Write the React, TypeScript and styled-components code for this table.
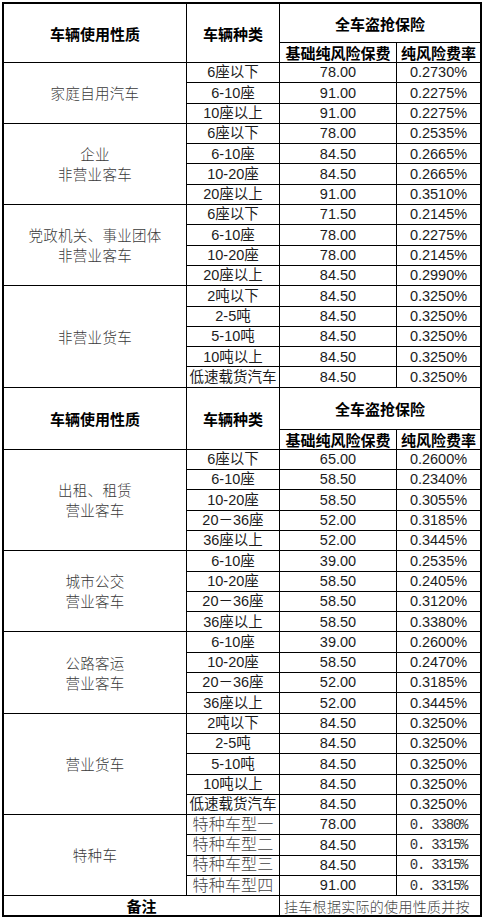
import React from 'react'
import styled, { createGlobalStyle } from 'styled-components'

const GlobalStyle = createGlobalStyle`
  html, body {
    margin: 0;
    padding: 0;
    background: #fff;
  }
  body {
    font-family: "Liberation Sans", "Noto Sans CJK SC", sans-serif;
  }
`

type Row = [string, string, string] // kind, base premium, rate
type Section = {
  name: string[] // category label, one entry per line
  rows: Row[]
  special?: boolean
}

const trucks: Row[] = [
  ['2吨以下', '84.50', '0.3250%'],
  ['2-5吨', '84.50', '0.3250%'],
  ['5-10吨', '84.50', '0.3250%'],
  ['10吨以上', '84.50', '0.3250%'],
  ['低速载货汽车', '84.50', '0.3250%'],
]

const partOne: Section[] = [
  {
    name: ['家庭自用汽车'],
    rows: [
      ['6座以下', '78.00', '0.2730%'],
      ['6-10座', '91.00', '0.2275%'],
      ['10座以上', '91.00', '0.2275%'],
    ],
  },
  {
    name: ['企业', '非营业客车'],
    rows: [
      ['6座以下', '78.00', '0.2535%'],
      ['6-10座', '84.50', '0.2665%'],
      ['10-20座', '84.50', '0.2665%'],
      ['20座以上', '91.00', '0.3510%'],
    ],
  },
  {
    name: ['党政机关、事业团体', '非营业客车'],
    rows: [
      ['6座以下', '71.50', '0.2145%'],
      ['6-10座', '78.00', '0.2275%'],
      ['10-20座', '78.00', '0.2145%'],
      ['20座以上', '84.50', '0.2990%'],
    ],
  },
  { name: ['非营业货车'], rows: trucks },
]

const partTwo: Section[] = [
  {
    name: ['出租、租赁', '营业客车'],
    rows: [
      ['6座以下', '65.00', '0.2600%'],
      ['6-10座', '58.50', '0.2340%'],
      ['10-20座', '58.50', '0.3055%'],
      ['20－36座', '52.00', '0.3185%'],
      ['36座以上', '52.00', '0.3445%'],
    ],
  },
  {
    name: ['城市公交', '营业客车'],
    rows: [
      ['6-10座', '39.00', '0.2535%'],
      ['10-20座', '58.50', '0.2405%'],
      ['20－36座', '58.50', '0.3120%'],
      ['36座以上', '58.50', '0.3380%'],
    ],
  },
  {
    name: ['公路客运', '营业客车'],
    rows: [
      ['6-10座', '39.00', '0.2600%'],
      ['10-20座', '58.50', '0.2470%'],
      ['20－36座', '52.00', '0.3185%'],
      ['36座以上', '52.00', '0.3445%'],
    ],
  },
  { name: ['营业货车'], rows: trucks },
  {
    name: ['特种车'],
    special: true,
    rows: [
      ['特种车型一', '78.00', '0. 3380%'],
      ['特种车型二', '84.50', '0. 3315%'],
      ['特种车型三', '84.50', '0. 3315%'],
      ['特种车型四', '91.00', '0. 3315%'],
    ],
  },
]

// the black background shows through the 1px gaps and becomes the rules
const Sheet = styled.div`
  display: flex;
  flex-direction: column;
  gap: 1px;
  width: fit-content;
  margin: 2px 0 0 2px;
  padding: 2px;
  background: #000;
`

const Block = styled.div<{ $rows: string }>`
  display: grid;
  grid-template-columns: 182px 92px 116px 83px;
  grid-template-rows: ${(p) => p.$rows};
  gap: 1px;
`

const Cell = styled.div`
  display: flex;
  align-items: center;
  justify-content: center;
  background: #fff;
  color: #1c1c1c;
  font-size: 14.5px;
  line-height: 1;
  white-space: nowrap;
  overflow: hidden;
`

const HeadCell = styled(Cell)<{ $rowSpan?: number; $colSpan?: number }>`
  grid-row: ${(p) => (p.$rowSpan ? `span ${p.$rowSpan}` : 'auto')};
  grid-column: ${(p) => (p.$colSpan ? `span ${p.$colSpan}` : 'auto')};
  font-family: "Noto Sans CJK SC", sans-serif;
  font-size: 15px;
  font-weight: 700;
  color: #000;
`

const KindCell = styled(Cell)<{ $span: number }>`
  grid-row: span ${(p) => p.$span};
  flex-direction: column;
  font-family: "Noto Sans CJK SC", sans-serif;
  font-size: 14.5px;
  font-weight: 300;
  line-height: 20px;
  letter-spacing: 0.3px;
  color: #3a3a3a;
`

const TypeCell = styled(Cell)<{ $special?: boolean }>`
  font-size: ${(p) => (p.$special ? '16px' : '14.5px')};
  font-weight: ${(p) => (p.$special ? 300 : 400)};
  color: ${(p) => (p.$special ? '#444' : '#1c1c1c')};
  letter-spacing: ${(p) => (p.$special ? '0.2px' : '0')};
`

const RateCell = styled(Cell)<{ $special?: boolean }>`
  font-family: ${(p) => (p.$special ? '"Liberation Mono", monospace' : '"Liberation Sans", sans-serif')};
  font-size: ${(p) => (p.$special ? '14px' : '14.5px')};
  letter-spacing: ${(p) => (p.$special ? '-1.2px' : '0')};
  color: ${(p) => (p.$special ? '#333' : '#1c1c1c')};
`

const NoteLabel = styled(HeadCell)`
  grid-column: span 2;
`

const NoteText = styled(Cell)`
  grid-column: span 2;
  justify-content: flex-start;
  padding-left: 4px;
  font-family: "Noto Sans CJK SC", sans-serif;
  font-size: 14px;
  letter-spacing: 0.3px;
  font-weight: 300;
  color: #444;
`

const Header = ({ top }: { top: number }) => (
  <Block $rows={`${top}px 19px`}>
    <HeadCell $rowSpan={2}>车辆使用性质</HeadCell>
    <HeadCell $rowSpan={2}>车辆种类</HeadCell>
    <HeadCell $colSpan={2}>全车盗抢保险</HeadCell>
    <HeadCell>基础纯风险保费</HeadCell>
    <HeadCell>纯风险费率</HeadCell>
  </Block>
)

const SectionBlock = ({ section }: { section: Section }) => {
  const { name, rows, special } = section
  return (
    <Block $rows={`repeat(${rows.length}, 19.3px)`}>
      <KindCell $span={rows.length}>
        {name.map((line) => (
          <span key={line}>{line}</span>
        ))}
      </KindCell>
      {rows.map(([kind, base, rate]) => (
        <React.Fragment key={kind}>
          <TypeCell $special={special}>{kind}</TypeCell>
          <Cell>{base}</Cell>
          <RateCell $special={special}>{rate}</RateCell>
        </React.Fragment>
      ))}
    </Block>
  )
}

export default function App() {
  return (
    <>
      <GlobalStyle />
      <Sheet>
        <Header top={38} />
        {partOne.map((s) => (
          <SectionBlock key={s.name.join()} section={s} />
        ))}
        <Header top={41} />
        {partTwo.map((s) => (
          <SectionBlock key={s.name.join()} section={s} />
        ))}
        <Block $rows="19px">
          <NoteLabel>备注</NoteLabel>
          <NoteText>挂车根据实际的使用性质并按</NoteText>
        </Block>
      </Sheet>
    </>
  )
}
